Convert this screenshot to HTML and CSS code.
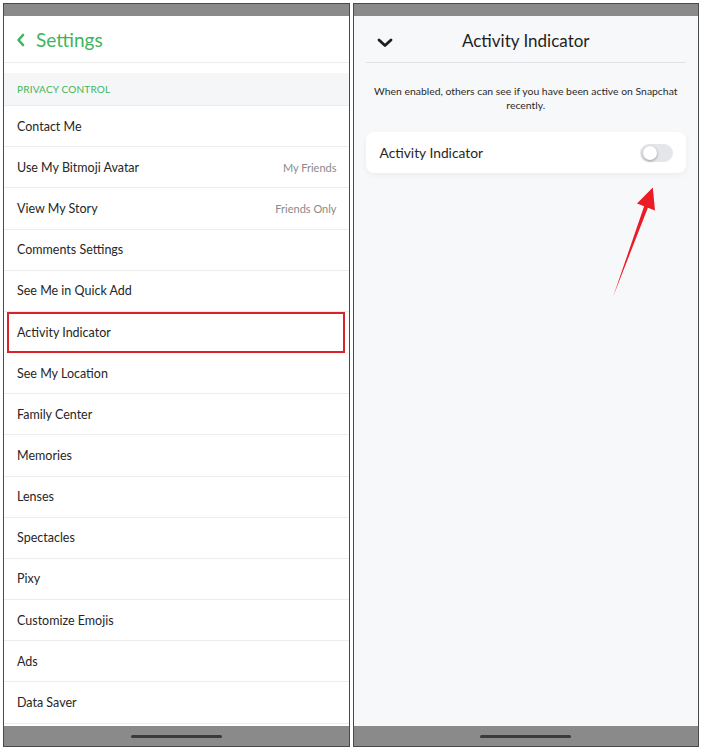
FILE: index.html
```html
<!DOCTYPE html>
<html lang="en">
<head>
    <meta charset="UTF-8">
    <title>Snapchat - Activity Indicator</title>
    <link rel="stylesheet" href="styles.css">
</head>
<body>
    <div class="screen">
        <!-- Settings list -->
        <div class="phone">
            <div class="status-bar"></div>
            <div class="content">
                <div class="settings-header">
                    <svg class="back" width="9" height="14" viewBox="0 0 9 14">
                        <path d="M7 2 L2.5 7 L7 12" fill="none" stroke="#3eb55b" stroke-width="2.6" stroke-linecap="round" stroke-linejoin="round"/>
                    </svg>
                    <span>Settings</span>
                </div>
                <div class="section-title">PRIVACY CONTROL</div>
                <div class="row">Contact Me</div>
                <div class="row">Use My Bitmoji Avatar <span class="value">My Friends</span></div>
                <div class="row">View My Story <span class="value">Friends Only</span></div>
                <div class="row">Comments Settings</div>
                <div class="row">See Me in Quick Add</div>
                <div class="row highlighted">Activity Indicator</div>
                <div class="row">See My Location</div>
                <div class="row">Family Center</div>
                <div class="row">Memories</div>
                <div class="row">Lenses</div>
                <div class="row">Spectacles</div>
                <div class="row">Pixy</div>
                <div class="row">Customize Emojis</div>
                <div class="row">Ads</div>
                <div class="row">Data Saver</div>
            </div>
            <div class="home-bar"><div class="handle"></div></div>
        </div>

        <!-- Activity Indicator screen -->
        <div class="phone light">
            <div class="status-bar"></div>
            <div class="content padded">
                <div class="detail-header">
                    <svg class="down" width="16" height="10" viewBox="0 0 16 10">
                        <path d="M2 2 L8 7.5 L14 2" fill="none" stroke="#1e1e1e" stroke-width="2.8" stroke-linecap="round" stroke-linejoin="round"/>
                    </svg>
                    <span class="title">Activity Indicator</span>
                </div>
                <p class="description">When enabled, others can see if you have been active on Snapchat recently.</p>
                <div class="card">
                    <span>Activity Indicator</span>
                    <div class="toggle"><div class="knob"></div></div>
                </div>
            </div>
            <div class="home-bar"><div class="handle"></div></div>
        </div>
    </div>

    <svg class="arrow" width="702" height="750" viewBox="0 0 702 750">
        <polygon points="613,297 644.1,206.3 637,203.5 652.8,187.5 655,210.5 647.9,207.7" fill="#ec1c24"/>
    </svg>
</body>
</html>
```

FILE: styles.css
```css
body {
    margin: 0;
    background-color: #fff;
    font-family: Lato, "Noto Sans", sans-serif;
    color: #262626;
}
.screen {
    display: flex;
    gap: 3px;
    padding: 3px;
    height: 744px;
}
.phone {
    flex: 1;
    display: flex;
    flex-direction: column;
    border: 1px solid #4a4a4a;
    background-color: #fff;
    overflow: hidden;
}
.phone.light {
    background-color: #f7f8fa;
}
.status-bar {
    height: 12px;
    background-color: #8a8a8a;
}
.content {
    flex: 1;
    overflow: hidden;
}
.content.padded {
    padding: 0 12px;
}
.home-bar {
    height: 20px;
    background-color: #8a8a8a;
    display: flex;
    align-items: center;
    justify-content: center;
}
.handle {
    width: 91px;
    height: 3px;
    border-radius: 2px;
    background-color: #3a3a3a;
}

/* left screen */
.settings-header {
    height: 45px;
    padding-top: 1px;
    display: flex;
    align-items: center;
    gap: 11px;
    padding-left: 12px;
    border-bottom: 1px solid #ececec;
    color: #3eb55b;
    font-size: 19px;
    margin-bottom: 10px;
}
.section-title {
    height: 32px;
    line-height: 33px;
    padding-left: 13px;
    background-color: #f5f6f8;
    color: #3eb55b;
    font-size: 10px;
    letter-spacing: 0.2px;
    border-bottom: 1px solid #ececec;
}
.row {
    height: 40.2px;
    display: flex;
    align-items: center;
    justify-content: space-between;
    padding: 0 12px 0 13px;
    border-bottom: 1px solid #ececec;
    font-size: 12.5px;
    box-sizing: content-box;
}
.row .value {
    color: #8a8a8a;
    font-size: 11px;
}
.row.highlighted {
    margin: 0 4px 0 3px;
    padding-left: 8px;
    height: 37px;
    border: 2px solid #d9232a;
}

/* right screen */
.detail-header {
    position: relative;
    height: 43px;
    padding-top: 3px;
    display: flex;
    align-items: center;
    justify-content: center;
    border-bottom: 1px solid #e2e3e6;
}
.detail-header .down {
    position: absolute;
    left: 11px;
    top: 22px;
}
.detail-header .title {
    font-size: 17px;
    color: #1e1e1e;
}
.description {
    margin: 21px 0 0;
    font-size: 10.4px;
    line-height: 14px;
    text-align: center;
    color: #2a2a2a;
}
.card {
    margin-top: 20px;
    height: 41px;
    background-color: #fff;
    border-radius: 8px;
    box-shadow: 0 2px 6px rgba(0, 0, 0, 0.05);
    display: flex;
    align-items: center;
    justify-content: space-between;
    padding: 0 13px 0 14px;
    font-size: 13.8px;
}
.toggle {
    width: 33px;
    height: 18px;
    border-radius: 9px;
    background-color: #e4e6ea;
    display: flex;
    align-items: center;
    padding-left: 3px;
    box-sizing: border-box;
}
.knob {
    width: 14px;
    height: 14px;
    border-radius: 50%;
    background-color: #fff;
    box-shadow: 0 1px 3px rgba(0, 0, 0, 0.35);
}
.arrow {
    position: absolute;
    top: 0;
    left: 0;
    pointer-events: none;
}
```
